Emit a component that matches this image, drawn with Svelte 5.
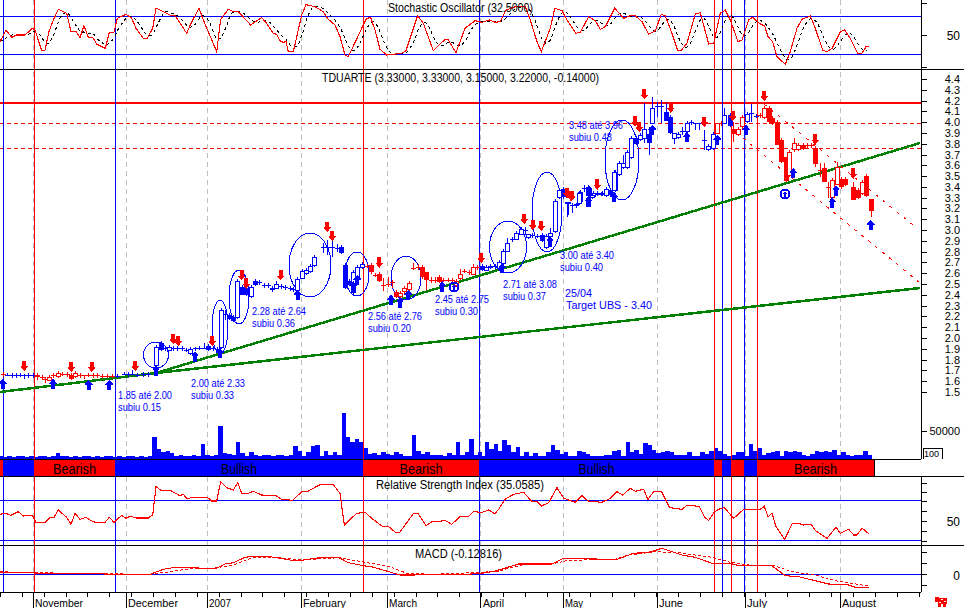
<script>
  const W = 964, H = 608, AX = 921;
  const GRAY = [33, 126, 207, 301, 387, 480, 563, 657, 745, 840];
  const REDV = [34, 363, 714, 731, 757];
  const BLUEV = [3, 115, 479, 722, 744];
  const BAND = [[0,3,'r'],[3,34,'b'],[34,115,'r','Bearish',43],[115,363,'b','Bullish',36],[363,479,'r','Bearish',43],[479,714,'b','Bullish',36],[714,722,'r'],[722,731,'b'],[731,744,'r'],[744,757,'b'],[757,874,'r','Bearish',43]];
  const colorAt = (x) => { const s = BAND.find((b) => x >= b[0] && x < b[1]); return s && s[2] === 'r' ? '#f00' : '#00f'; };

  const z = (pts, ox, oy) => pts.map(([a, b]) => [ox + a / 3, oy + b / 3]);
  const ps = (pts) => pts.map((p) => p[0].toFixed(1) + ',' + p[1].toFixed(1)).join(' ');

  const stoch = [
    ...z([[0,125],[18,90],[35,112],[50,105],[75,105],[97,85],[105,90],[125,152],[135,150],[147,95],[160,60],[175,28],[200,40],[213,95],[228,95],[240,112],[252,77],[265,112],[278,112],[290,132],[316,145],[328,97],[342,97],[352,55],[378,43],[395,55],[408,85],[430,115],[442,115],[458,85],[468,24],[510,45],[525,47],[560,100],[572,72],[597,25],[612,65],[650,155],[662,58],[685,28],[700,35],[715,35],[752,75],[785,53],[800,70],[820,100],[830,103],[840,122],[850,127],[858,125],[865,155],[880,155],[905,45],[918,14],[945,20],[970,35],[985,58],[1005,75],[1020,110],[1035,165],[1045,170],[1090,75],[1100,55],[1112,53],[1125,90],[1140,148],[1160,165],[1205,160],[1218,152],[1253,47],[1270,70],[1300,152],[1335,118],[1345,120],[1368,158],[1395,85],[1425,62]], 0, 0),
    ...z([[0,67],[22,60],[40,67],[55,65],[72,30],[100,20],[130,20],[145,60],[165,125],[178,155],[205,85],[218,25],[240,32],[255,60],[282,100],[295,97],[320,50],[340,62],[355,88],[370,80],[398,25],[425,55],[445,47],[460,47],[480,65],[500,103],[520,92],[538,43],[550,48],[570,100],[587,152],[597,152],[615,130],[640,42],[655,38],[680,132],[695,130],[715,40],[730,30],[745,60],[768,125],[780,120],[800,60],[812,52],[835,72],[848,78],[858,110],[872,125],[885,170],[910,193],[925,155],[945,85],[960,58],[985,48],[1000,85],[1022,150],[1035,155],[1050,145],[1075,95],[1088,90],[1105,115],[1128,162],[1140,160],[1152,140],[1162,140]], 482, 0)
  ];
  const interp = (pts, x) => {
    for (let i = 1; i < pts.length; i++) if (x <= pts[i][0]) {
      const [a, b] = [pts[i - 1], pts[i]];
      return a[1] + (b[1] - a[1]) * (x - a[0]) / Math.max(b[0] - a[0], 0.01);
    }
    return pts[pts.length - 1][1];
  };
  const stochSig = [];
  for (let x = 0; x <= 869; x += 2.2) {
    let s = 0;
    for (let k = 0; k < 4; k++) s += interp(stoch, Math.max(0, x - k * 3.4));
    stochSig.push([x, s / 4]);
  }

  const rsi = [
    ...z([[0,343],[18,340],[32,346],[55,335],[70,348],[97,346],[108,367],[135,367],[150,352],[162,352],[175,330],[200,352],[213,373],[225,340],[240,358],[258,352],[270,360],[285,367],[315,367],[328,352],[342,367],[365,346],[378,355],[390,349],[410,354],[445,354],[458,345],[468,260],[483,271],[510,271],[540,287],[550,283],[562,297],[575,292],[622,292],[635,303],[650,303],[662,245],[680,263],[700,270],[713,248],[725,280],[745,280],[760,274],[785,285],[830,288],[845,298],[878,301],[905,275],[925,273],[960,254],[1000,254],[1020,280],[1033,375],[1070,340],[1095,337],[1115,355],[1147,379],[1165,379],[1188,398],[1200,396],[1240,341],[1255,341],[1278,377],[1295,365],[1315,365],[1335,361],[1355,373],[1380,350],[1405,350],[1420,335]], 0, 400),
    ...z([[0,337],[20,330],[38,341],[50,328],[70,297],[95,283],[125,277],[148,303],[165,305],[178,318],[200,308],[225,263],[245,295],[280,307],[300,287],[318,303],[360,307],[385,295],[405,275],[422,285],[445,265],[460,274],[485,268],[498,299],[515,274],[538,274],[563,323],[600,328],[615,316],[652,319],[667,350],[680,362],[695,338],[710,328],[727,323],[755,355],[785,328],[835,328],[847,319],[858,350],[870,340],[882,380],[908,418],[930,372],[945,369],[965,375],[988,373],[1000,392],[1035,415],[1062,382],[1075,400],[1100,388],[1115,405],[1125,405],[1140,384],[1162,403]], 482, 400)
  ];
  const macd = [
    ...z([[0,517],[100,518],[110,520],[290,521],[340,523],[450,523],[490,508],[525,502],[620,505],[650,505],[675,492],[700,488],[735,472],[760,469],[810,470],[875,481],[905,481],[960,473],[1015,472],[1045,488],[1090,497],[1115,500],[1200,525],[1240,525],[1300,523],[1400,523]], 0, 400),
    ...z([[0,520],[40,513],[110,492],[210,492],[245,475],[305,475],[330,477],[405,478],[455,460],[500,457],[540,445],[600,465],[640,472],[690,490],[745,490],[770,497],[870,497],[910,527],[950,530],[1040,552],[1100,555],[1120,562],[1162,562]], 482, 400)
  ];
  const macdSig = [
    ...z([[0,515],[100,518],[290,521],[450,523],[510,515],[570,506],[640,505],[700,495],[760,472],[830,472],[905,480],[960,476],[1020,473],[1090,486],[1170,500],[1220,520],[1300,523]], 0, 400),
    ...z([[0,517],[50,513],[120,495],[210,492],[250,483],[300,480],[400,478],[440,465],[520,455],[590,458],[690,472],[745,487],[800,495],[870,495],[930,515],[1000,525],[1060,542],[1160,558]], 482, 400)
  ];

  const volA = {468:65,483:30,495:22,507:24,520:18,610:45,662:100,675:18,688:15,710:50,725:18,750:22,765:12,890:38,905:25,917:10,930:22,945:40,958:42,985:25,1005:20,1032:138,1047:65,1060:52,1073:60,1085:50,1100:32,1115:15,1130:18,1145:22,1160:15,1187:22,1200:15,1240:72,1255:25,1268:15,1280:22,1300:12,1320:12,1355:18,1381:52,1395:20,1408:18,1420:60,1435:22,172:18,226:10,605:38};
  const volB = {10:52,22:30,35:45,50:25,62:58,75:42,88:18,100:20,113:35,128:22,140:22,155:18,168:14,180:10,195:15,205:20,215:42,230:28,243:15,255:22,270:8,280:10,292:25,305:20,318:15,330:10,345:10,358:10,370:12,382:12,396:25,408:28,420:10,433:52,447:22,460:28,472:15,485:48,497:22,510:42,522:28,535:18,548:20,560:25,575:20,590:12,610:12,625:22,640:10,650:8,665:20,680:15,692:25,705:32,717:25,730:15,745:10,765:20,780:22,795:10,807:45,820:25,832:32,845:12,860:18,873:22,885:25,895:8,908:25,922:20,935:25,947:22,960:12,975:10,990:15,1005:25,1020:20,1035:25,1050:22,1062:28,1075:12,1090:20,1105:10,1120:12,1135:12,1150:25,1160:12};
  const vols = [];
  for (let zx = 2; zx < 1446; zx += 13.2) {
    let h = zx < 455 ? 7 + (Math.round(zx) % 3) : 9 + (Math.round(zx) % 5);
    for (const k in volA) if (Math.abs(k - zx) <= 6.6) h = volA[k];
    vols.push([zx / 3 - 2.2, h / 3]);
  }
  for (let zx = 2; zx < 1170; zx += 13.2) {
    let h = 8 + (Math.round(zx) % 5);
    for (const k in volB) if (Math.abs(k - zx) <= 6.6) h = volB[k];
    vols.push([482 + zx / 3 - 2.2, h / 3]);
  }

  const c3 = [[8,462,466,0,455,472],[22,464,466,0,460,468],[35,465,467,0],[48,465,467,0],[60,464,466,0],[72,464,466,0,462,476],[85,466,468,0],[98,466,468,0],[112,466,473,0],[125,472,474,0],[135,477,478,0,470,490],[147,470,478,1],[160,465,467,0],[173,458,468,1],[187,461,463,0],[200,463,466,0],[213,466,475,0],[226,458,468,1],[240,465,467,0],[253,466,468,0,466,478],[265,465,467,0,460,470],[278,466,468,0],[290,466,468,0],[305,467,469,0],[320,467,469,0],[335,467,469,0],[350,467,469,0],[372,462,464,0,456,466],[385,462,464,0],[397,461,463,0,450,465],[410,464,466,0],[430,463,465,0],[445,463,465,0],[468,380,435,1],[483,370,388,0],[495,384,386,0],[507,380,388,1],[520,385,387,0],[532,385,387,0],[545,385,387,0],[558,389,391,0],[571,386,398,1],[585,385,387,0,380,392],[598,383,385,0],[612,383,385,0,368,385],[625,378,386,0],[638,384,386,0],[650,387,389,0],[662,270,380,1],[675,283,287,0,270,300],[688,285,295,0],[700,290,300,0],[712,183,290,1],[725,200,220,0],[738,205,222,0],[752,200,228,1],[765,183,192,0],[778,186,190,0],[792,196,198,0],[805,196,198,0],[815,203,210,0],[829,193,205,1,182,205],[842,199,201,0],[855,201,203,0],[870,204,206,0],[880,207,209,0],[892,178,212,1],[906,152,172,1],[918,150,160,1],[931,137,152,1],[943,112,135,1]];
  const c4 = [[8,261,263,0,250,280],[22,261,263,0,240,285],[35,261,263,0,235,290],[50,264,266,0,252,275],[62,260,275,0],[75,315,380,0],[88,362,372,0],[100,335,395,1],[112,320,350,1],[125,312,320,1],[140,317,319,0],[153,316,335,0],[165,344,346,0],[178,342,360,0],[190,374,376,0,355,392],[203,371,373,0,352,380],[215,366,370,0,360,385],[228,395,408,0],[240,400,410,1],[253,385,395,1],[266,370,387,1,362,395],[280,324,326,0,310,330],[293,321,323,0,312,330],[306,322,350,0],[318,335,355,0,335,390],[332,361,363,0,350,368],[345,361,363,0,350,368],[358,350,362,0],[370,359,361,0],[383,359,361,0],[395,359,361,0],[407,362,375,1],[420,342,355,1,328,360],[433,334,336,0,328,340],[446,337,339,0],[460,322,342,1,312,345],[472,321,323,0],[485,318,328,0],[498,320,328,1],[511,317,322,0],[524,319,321,0],[537,307,325,1],[549,273,308,1],[562,250,275,1,235,275],[575,237,239,0,230,245],[588,218,235,1],[602,207,222,1,200,225],[615,209,211,0,200,225],[623,222,230,1,222,238],[636,224,227,0],[650,227,229,0],[665,225,240,0],[678,228,262,1],[690,218,228,1,205,230],[704,123,212,1],[718,90,110,1],[730,88,110,0],[743,125,132,0,125,165],[755,134,136,0,130,158],[767,132,134,0,130,145],[780,97,125,1],[793,84,86,0,76,95],[806,85,105,0],[818,100,108,1],[832,99,101,0],[845,99,101,0],[857,90,105,1],[870,90,100,0],[884,35,90,1],[897,10,40,1],[909,10,20,0]];
  const c5 = [[22,365,372,0,365,410],[35,374,376,0,374,398],[47,374,376,0],[58,338,368,1],[72,324,326,0,315,335],[85,322,345,0],[97,345,352,1],[110,341,343,0],[123,341,343,0],[137,328,345,1],[150,330,342,0],[163,275,328,1],[176,250,282,1],[188,250,262,1,225,262],[200,215,260,1],[212,175,232,1],[228,175,190,0],[240,165,178,1],[252,148,175,1,70,190],[267,162,185,0,140,225],[277,85,130,1,50,130],[291,79,81,0,65,110],[303,79,81,0,60,130],[318,95,118,0,70,118],[330,110,155,0],[341,160,175,1,160,192],[353,162,172,1],[367,154,156,0,140,165],[380,130,155,1],[392,127,129,0],[405,129,131,0,129,150],[418,129,131,0,129,150],[432,181,183,0,150,210],[445,198,206,1],[458,162,205,1],[470,130,160,1,130,162],[482,129,131,0],[493,105,130,1,85,130],[510,105,135,0],[520,148,160,0,125,185],[533,148,162,1],[546,112,140,1],[560,102,122,1],[573,99,101,0,72,125],[587,107,109,0],[600,106,108,0],[612,85,112,1],[626,85,125,0],[637,115,128,0],[650,125,190,0],[662,180,243,0],[677,232,300,0,232,305],[688,215,285,1],[702,190,208,1,175,215],[715,195,208,1],[728,196,205,0],[741,196,198,0],[754,196,198,0],[766,205,250,0,198,260],[779,269,271,0,250,292],[792,265,305,0,250,305],[805,321,323,0,305,355],[817,300,350,1],[830,260,312,1,245,312],[842,298,320,0],[855,298,312,0],[880,322,358,0,305,358],[893,330,350,0],[906,307,340,1],[919,287,345,0],[932,358,392,0,358,412]];
  const mk = (list, ox, oy) => list.map(([zx, t, b, hollow, hi, lo]) => {
    const x = ox + zx / 3, top = oy + t / 3, bot = oy + b / 3;
    return { x: Math.round(x), top: Math.round(top), h: Math.max(1, Math.round(bot - top)), hollow: !!hollow,
      hi: oy + (hi ?? t - 6) / 3, lo: oy + (lo ?? b + 6) / 3, color: colorAt(x) };
  });
  const candles = [...mk(c3, 0, 220), ...mk(c4, 320, 160), ...mk(c5, 560, 80)];

  const ARROWS_DOWN = [...z([[73,437],[214,440],[275,440],[406,437],[520,356],[535,362],[637,362],[725,165],[739,190],[842,165]], 0, 220), ...z([[22,200],[37,227],[178,307],[484,293],[613,176],[638,194],[664,197],[741,98],[755,107],[832,73]], 320, 160), ...z([[33,347],[112,313],[225,123],[238,140],[253,42],[332,82],[433,125],[518,107],[613,47],[766,178],[880,280]], 560, 80)];
  const ARROWS_UP = [...z([[8,492],[159,492],[266,495],[328,495],[468,452],[585,410],[660,400],[893,225]], 0, 220), ...z([[100,380],[112,360],[213,420],[240,428],[265,405],[367,380],[547,325],[690,245],[806,125],[882,112]], 320, 160), ...z([[85,365],[163,352],[277,150],[380,172],[472,180],[558,150],[700,280],[817,368],[828,332],[932,435]], 560, 80)];
  const upPath = (x, y) => `M${x} ${y - 5.5}l4 5h-2v5.5h-4v-5.5h-2z`;
  const downPath = (x, y) => `M${x} ${y + 5.5}l4 -5h-2v-5.5h-4v5.5h-2z`;
  const CIRCLED = [[454, 287], [785, 194]];

  const ELLIPSES = [[156,355,12.5,13],[220,327,8,27],[239,297,10,27],[310,265,21,32],[357,274,12,22],[406,278,15,22],[508,247,18.5,26],[547,212,15,40],[622,160,17,40]];
  const NOTES = [
    [118,399,'1.85 até 2.00',54],[118,411,'subiu 0.15',43],[191,387,'2.00 até 2.33',54],[191,399,'subiu 0.33',43],
    [252,315,'2.28 até 2.64',54],[252,327,'subiu 0.36',43],[368,320,'2.56 até 2.76',54],[368,332,'subiu 0.20',43],
    [435,303,'2.45 até 2.75',54],[435,315,'subiu 0.30',43],[503,288,'2.71 até 3.08',54],[503,300,'subiu 0.37',43],
    [560,259,'3.00 até 3.40',54],[560,271,'subiu 0.40',43],[565,297,'25/04',27],[566,309,'Target UBS - 3.40',86],
    [569,129,'3.48 até 3.96',54],[569,141,'subiu 0.48',43]
  ];
  const priceY = (i) => 79 + i * 10.79;
  const PRICES = Array.from({ length: 30 }, (_, i) => ({ y: priceY(i), t: (4.4 - i / 10).toFixed(1) }));
  const TITLES = [
    [388,12,145,'Stochastic Oscillator (32.5000)'],
    [322,82,277,'TDUARTE (3.33000, 3.33000, 3.15000, 3.22000, -0.14000)'],
    [376,489,168,'Relative Strength Index (35.0585)'],
    [415,558,87,'MACD (-0.12816)']
  ];
  const MONTHS = [[35,'November',48],[128,'December',50],[209,'2007',22],[303,'February',43],[389,'March',28],[483,'April',21],[565,'May',18],[659,'June',24],[747,'July',20],[842,'August',34]];
  const TICKS_X = Array.from({ length: 43 }, (_, i) => Math.round(i * 21.87) + 0.5);
  const RIGHT_TICKS = [3, 35, 67, 483, 492, 501, 511, 521, 531, 541, 552, 563, 574, 585];
</script>

<div class="chart">
  <svg width={W} height={H} viewBox="0 0 {W} {H}">
    {#each GRAY as x}<line class="gray" x1={x + 0.5} x2={x + 0.5} y1="0" y2="592" />{/each}

    {#each vols as v}<rect class="vol" x={v[0]} y={459 - v[1]} width="4.4" height={v[1]} />{/each}

    <line class="blue" x1="0" x2={AX} y1="16.5" y2="16.5" />
    <line class="blue" x1="0" x2={AX} y1="54.5" y2="54.5" />
    <line class="blue" x1="0" x2={AX} y1="500.5" y2="500.5" />
    <line class="blue" x1="0" x2={AX} y1="540.5" y2="540.5" />
    <line class="blue" x1="0" x2={AX} y1="574.5" y2="574.5" />
    <rect class="redfill" x="0" y="102" width={AX} height="2" />
    <line class="reddash" x1="0" x2={AX} y1="123.5" y2="123.5" />
    <line class="reddash" x1="0" x2={AX} y1="148.5" y2="148.5" />

    {#each REDV as x}<line class="red" x1={x + 0.5} x2={x + 0.5} y1="0" y2="592" />{/each}
    {#each BLUEV as x}<line class="blue" x1={x + 0.5} x2={x + 0.5} y1="0" y2="592" />{/each}

    <polyline class="dash-black" points={ps(stochSig)} />
    <polyline class="red" points={ps(stoch)} />

    <line class="green" x1="0" y1="392" x2="156" y2="373" />
    <line class="green" x1="156" y1="373" x2="920" y2="143" />
    <line class="green" x1="156" y1="373" x2="920" y2="288" />
    <line class="trend" x1="764" y1="104" x2="918" y2="229" />
    <line class="trend" x1="743" y1="138" x2="920" y2="283" />

    {#each ELLIPSES as e}<ellipse class="oval" cx={e[0]} cy={e[1]} rx={e[2]} ry={e[3]} />{/each}
    {#each candles as k}
      <line x1={k.x + 0.5} x2={k.x + 0.5} y1={k.hi} y2={k.lo} stroke={k.color} />
      {#if k.hollow}
        <rect x={k.x - 1.5} y={k.top + 0.5} width="4" height={k.h} fill="#fff" stroke={k.color} />
      {:else}
        <rect x={k.x - 2} y={k.top} width="5" height={k.h + (k.h < 3 ? 0 : 1)} fill={k.color} />
      {/if}
    {/each}

    {#each ARROWS_DOWN as a}<path class="redfill" d={downPath(a[0], a[1])} />{/each}
    {#each ARROWS_UP as a}<path class="bluefill" d={upPath(a[0], a[1])} />{/each}
    {#each CIRCLED as a}
      <circle class="ring" cx={a[0]} cy={a[1]} r="4.5" />
      <path class="bluefill" d={upPath(a[0], a[1] + 1)} transform="translate({a[0]} {a[1]}) scale(.6) translate({-a[0]} {-a[1]})" />
    {/each}

    {#each NOTES as n}<text class="note" x={n[0]} y={n[1]} textLength={n[3]} lengthAdjust="spacingAndGlyphs">{n[2]}</text>{/each}

    {#each BAND as b}
      <rect x={b[0]} y="459" width={b[1] - b[0]} height="17" fill={b[2] === 'r' ? '#f00' : '#00f'} />
      <line class="black" x1={b[1] + 0.5} x2={b[1] + 0.5} y1="459" y2="476" />
      {#if b[3]}<text class="band" x={(b[0] + b[1]) / 2 - b[4] / 2} y="474" textLength={b[4]} lengthAdjust="spacingAndGlyphs">{b[3]}</text>{/if}
    {/each}

    <polyline class="red" points={ps(rsi)} />
    <polyline class="reddash-fine" points={ps(macdSig)} />
    <polyline class="red" points={ps(macd)} />

    <line class="black" x1="0" x2={W} y1="69.5" y2="69.5" />
    <line class="black" x1="0" x2={AX} y1="459.5" y2="459.5" />
    <line class="black" x1="0" x2={W} y1="476.5" y2="476.5" />
    <line class="black" x1="0" x2={W} y1="545.5" y2="545.5" />
    <line class="black" x1="0" x2={AX} y1="592.5" y2="592.5" />
    <line class="black" x1={AX + 0.5} x2={AX + 0.5} y1="0" y2="459" />
    <line class="black" x1={AX + 0.5} x2={AX + 0.5} y1="477" y2="592" />

    {#each PRICES as p}
      <line class="black" x1={AX} x2={AX + 6} y1={Math.round(p.y) + 0.5} y2={Math.round(p.y) + 0.5} />
      <text class="axis" x="960" y={p.y + 4}>{p.t}</text>
    {/each}
    {#each RIGHT_TICKS as y}<line class="black" x1={AX} x2={AX + 6} y1={y + 0.5} y2={y + 0.5} />{/each}
    <line class="black" x1={AX} x2={AX + 6} y1="431.5" y2="431.5" />

    <text class="axis big" x="960" y="40">50</text>
    <text class="axis" x="960" y="435">50000</text>
    <text class="axis big" x="960" y="526">50</text>
    <text class="axis big" x="960" y="580">0</text>

    <path class="box" d="M923.5 459V448.5H942.5V459" />
    <text class="tiny" x="924" y="457">100</text>

    {#each TICKS_X as x}<line class="black" x1={x} x2={x} y1="592" y2="597" />{/each}
    {#each GRAY as x}<line class="black" x1={x + 0.5} x2={x + 0.5} y1="592" y2="608" />{/each}
    {#each MONTHS as m}<text class="month" x={m[0]} y="607" textLength={m[2]} lengthAdjust="spacingAndGlyphs">{m[1]}</text>{/each}

    {#each TITLES as t}<text class="title" x={t[0]} y={t[1]} textLength={t[2]} lengthAdjust="spacingAndGlyphs">{t[3]}</text>{/each}

    <g class="redfill">
      <rect x="938" y="598" width="9" height="6" />
      <rect x="935" y="597" width="4" height="5" />
      <rect x="938" y="604" width="3" height="3" />
      <rect x="943" y="604" width="3" height="3" />
    </g>
    <rect x="941" y="599" width="2" height="1" fill="#fff" />
    <rect x="944" y="601" width="2" height="1" fill="#fff" />
    <rect x="939" y="602" width="2" height="1" fill="#fff" />
  </svg>
</div>

<style>
  :global(body) { margin: 0; background: #fff; }
  .chart { width: 964px; height: 608px; overflow: hidden; background: #fff; }
  svg { display: block; shape-rendering: crispEdges; font-family: "Liberation Sans", Arial, sans-serif; }
  line.gray { stroke: #bdbdbd; stroke-width: 1; stroke-dasharray: 5 4; }
  line.blue { stroke: #00f; stroke-width: 1; }
  line.red { stroke: #f00; stroke-width: 1; }
  line.black { stroke: #000; stroke-width: 1; }
  line.reddash { stroke: #f00; stroke-width: 1; stroke-dasharray: 4 3; }
  line.green { stroke: #008000; stroke-width: 2.5; }
  line.trend { stroke: #f00; stroke-width: 1; stroke-dasharray: 3 6; }
  polyline { fill: none; }
  polyline.red { stroke: #f00; stroke-width: 1.1; }
  polyline.dash-black { stroke: #000; stroke-width: 1; stroke-dasharray: 3 3; }
  polyline.reddash-fine { stroke: #f00; stroke-width: 1; stroke-dasharray: 3 2; }
  .vol, .bluefill { fill: #00f; }
  .redfill { fill: #f00; }
  .oval, .ring { fill: none; stroke: #00f; stroke-width: 1; }
  .ring { stroke-width: 2; }
  .box { fill: none; stroke: #000; stroke-width: 1; }
  text { shape-rendering: auto; }
  .note { fill: #00f; font-size: 11px; }
  .band { fill: #000; font-size: 15px; }
  .axis { fill: #000; font-size: 11px; text-anchor: end; }
  .axis.big { font-size: 12px; }
  .tiny { fill: #000; font-size: 9px; }
  .month { fill: #000; font-size: 11.5px; }
  .title { fill: #000; font-size: 12px; }
</style>
